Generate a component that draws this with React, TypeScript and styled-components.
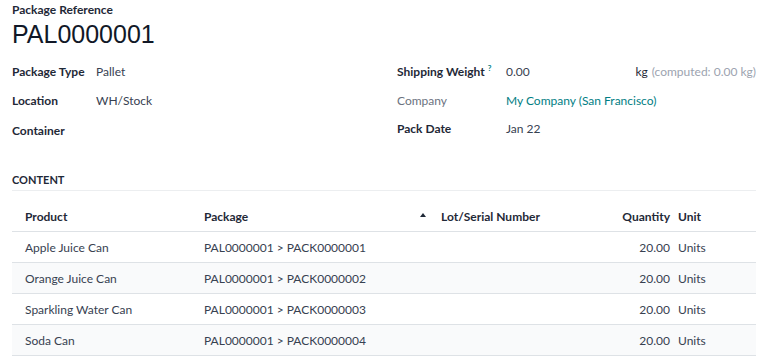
import React from 'react';
import styled, { createGlobalStyle } from 'styled-components';

const GlobalStyle = createGlobalStyle`
  body {
    margin: 0;
    background: #fff;
    font-family: Lato, "Noto Sans", sans-serif;
    font-size: 12px;
    color: #374151;
  }
`;

const Sheet = styled.div`
  padding: 3px 12px 0 12px;
  width: 744px;
`;

const RefLabel = styled.div`
  font-size: 12px;
  font-weight: 700;
  color: #1f2937;
  line-height: 13px;
`;

const Title = styled.h1`
  margin: 4px 0 7px 0;
  font-family: "Liberation Sans", Arial, sans-serif;
  font-weight: 400;
  font-size: 25px;
  line-height: 29px;
  color: #111827;
`;

const Groups = styled.div`
  display: grid;
  grid-template-columns: 385px 1fr;
`;

const Group = styled.div`
  display: flex;
  flex-direction: column;
`;

const Field = styled.div<{ $h: number }>`
  display: flex;
  align-items: center;
  height: ${p => p.$h}px;
`;

const Label = styled.div<{ $w: number; $muted?: boolean }>`
  width: ${p => p.$w}px;
  flex: none;
  font-weight: ${p => (p.$muted ? 400 : 700)};
  color: ${p => (p.$muted ? '#6b7280' : '#1f2937')};
`;

const Help = styled.sup`
  color: #017e84;
  font-size: 8px;
  margin-left: 3px;
  font-weight: 700;
`;

const Value = styled.div`
  flex: 1;
  display: flex;
  align-items: center;
  color: #374151;
`;

const Link = styled.span`
  color: #017e84;
`;

const Unit = styled.span`
  margin-left: auto;
  color: #1f2937;
`;

const Computed = styled.span`
  margin-left: 4px;
  color: #9ca3af;
`;

const SectionTitle = styled.div`
  margin-top: 28px;
  padding-bottom: 4px;
  border-bottom: 1px solid #eceef0;
  font-weight: 700;
  font-size: 11px;
  color: #1f2937;
  text-transform: uppercase;
`;

const Table = styled.table`
  margin-top: 10px;
  width: 100%;
  border-collapse: collapse;
  table-layout: fixed;
`;

const Th = styled.th<{ $align?: string; $pl?: number; $pr?: number }>`
  height: 30px;
  padding: 0 ${p => p.$pr ?? 8}px 0 ${p => p.$pl ?? 13}px;
  text-align: ${p => p.$align || 'left'};
  font-weight: 700;
  color: #1f2937;
  border-bottom: 1px solid #dee2e6;
  position: relative;
`;

const Row = styled.tr<{ $alt?: boolean }>`
  background: ${p => (p.$alt ? '#f9fafb' : '#fff')};
`;

const Td = styled.td<{ $align?: string; $pl?: number; $pr?: number }>`
  height: 30px;
  padding: 0 ${p => p.$pr ?? 8}px 0 ${p => p.$pl ?? 13}px;
  text-align: ${p => p.$align || 'left'};
  color: #374151;
  border-bottom: 1px solid #dee2e6;
  white-space: nowrap;
`;

const SortCaret = styled.span`
  position: absolute;
  right: 2px;
  top: 50%;
  transform: translateY(-75%);
  width: 0;
  height: 0;
  border-left: 3px solid transparent;
  border-right: 3px solid transparent;
  border-bottom: 4px solid #1f2937;
`;

const lines = [
  { product: 'Apple Juice Can', pkg: 'PAL0000001 > PACK0000001' },
  { product: 'Orange Juice Can', pkg: 'PAL0000001 > PACK0000002' },
  { product: 'Sparkling Water Can', pkg: 'PAL0000001 > PACK0000003' },
  { product: 'Soda Can', pkg: 'PAL0000001 > PACK0000004' },
];

export default function App() {
  return (
    <>
      <GlobalStyle />
      <Sheet>
        <RefLabel>Package Reference</RefLabel>
        <Title>PAL0000001</Title>
        <Groups>
          <Group>
            <Field $h={30}>
              <Label $w={84}>Package Type</Label>
              <Value>Pallet</Value>
            </Field>
            <Field $h={29}>
              <Label $w={84}>Location</Label>
              <Value>WH/Stock</Value>
            </Field>
            <Field $h={30}>
              <Label $w={84}>Container</Label>
              <Value />
            </Field>
          </Group>
          <Group>
            <Field $h={30}>
              <Label $w={109}>
                Shipping Weight<Help>?</Help>
              </Label>
              <Value>
                0.00
                <Unit>kg</Unit>
                <Computed>(computed: 0.00 kg)</Computed>
              </Value>
            </Field>
            <Field $h={29}>
              <Label $w={109} $muted>Company</Label>
              <Value>
                <Link>My Company (San Francisco)</Link>
              </Value>
            </Field>
            <Field $h={27}>
              <Label $w={109}>Pack Date</Label>
              <Value>Jan 22</Value>
            </Field>
          </Group>
        </Groups>
        <SectionTitle>Content</SectionTitle>
        <Table>
          <colgroup>
            <col style={{ width: 179 }} />
            <col style={{ width: 237 }} />
            <col />
            <col style={{ width: 80 }} />
            <col style={{ width: 82 }} />
          </colgroup>
          <thead>
            <tr>
              <Th>Product</Th>
              <Th>
                Package
                <SortCaret />
              </Th>
              <Th>Lot/Serial Number</Th>
              <Th $align="right" $pr={4}>Quantity</Th>
              <Th $pl={4}>Unit</Th>
            </tr>
          </thead>
          <tbody>
            {lines.map((l, i) => (
              <Row key={l.pkg} $alt={i % 2 === 1}>
                <Td>{l.product}</Td>
                <Td>{l.pkg}</Td>
                <Td />
                <Td $align="right" $pr={4}>20.00</Td>
                <Td $pl={4}>Units</Td>
              </Row>
            ))}
          </tbody>
        </Table>
      </Sheet>
    </>
  );
}
